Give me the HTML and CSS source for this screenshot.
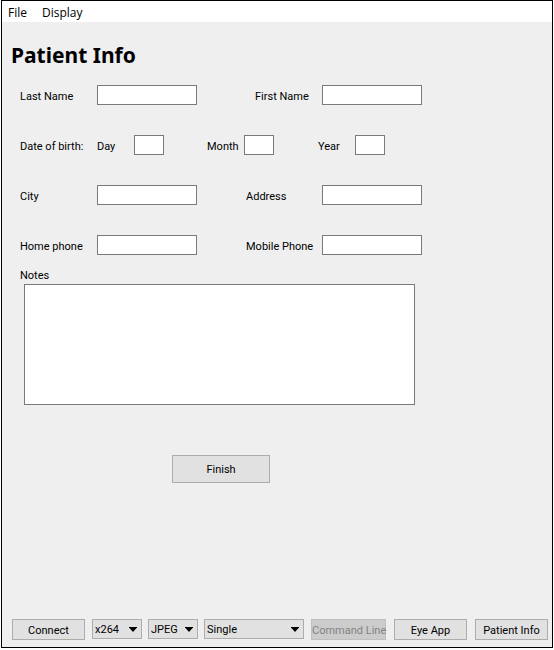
FILE: index.html
```html
<!DOCTYPE html>
<html lang="en">
<head>
<meta charset="utf-8">
<title>Patient Info</title>
<link rel="stylesheet" href="styles.css">
</head>
<body>
<div class="window">
  <nav class="menubar">
    <button type="button" class="menu">File</button>
    <button type="button" class="menu">Display</button>
  </nav>
  <main class="content">
    <h1 class="title">Patient Info</h1>
    <form class="form" id="patient">
      <div class="row">
        <label for="last">Last Name</label><input id="last" type="text">
        <label for="first" class="indent">First Name</label><input id="first" type="text">
      </div>
      <div class="row birth" role="group" aria-labelledby="birth">
        <span id="birth">Date of birth:</span>
        <label for="day">Day</label><input id="day" type="text">
        <label for="month">Month</label><input id="month" type="text">
        <label for="year">Year</label><input id="year" type="text">
      </div>
      <div class="row">
        <label for="city">City</label><input id="city" type="text">
        <label for="address">Address</label><input id="address" type="text">
      </div>
      <div class="row">
        <label for="home">Home phone</label><input id="home" type="text">
        <label for="mobile">Mobile Phone</label><input id="mobile" type="text">
      </div>
      <div class="notes">
        <label for="notes">Notes</label>
        <textarea id="notes"></textarea>
      </div>
      <button type="button" class="button finish">Finish</button>
    </form>
  </main>
  <footer class="toolbar">
    <button type="button" class="button">Connect</button>
    <div class="pickers">
      <div class="picker"><select aria-label="Codec"><option>x264</option></select></div>
      <div class="picker"><select aria-label="Image format"><option>JPEG</option></select></div>
      <div class="picker wide"><select aria-label="View"><option>Single</option></select></div>
    </div>
    <div class="views">
      <button type="button" class="button command" disabled>Command Line</button>
      <button type="button" class="button">Eye App</button>
      <button type="button" class="button">Patient Info</button>
    </div>
  </footer>
</div>
</body>
</html>
```
FILE: styles.css
```css
* {
  box-sizing: border-box;
}

body {
  margin: 0;
  padding: 0 1px 2px;
  background: #fff;
  color: #000;
  font: 11px/14px Roboto, "Noto Sans", sans-serif;
}

button,
input,
select,
textarea {
  margin: 0;
  border-radius: 0;
  color: inherit;
  font: inherit;
}

.window {
  display: flex;
  flex-direction: column;
  min-height: calc(100vh - 2px);
  border: 1px solid #000;
  background: #efefef;
}

.menubar {
  display: flex;
  gap: 15px;
  height: 21px;
  padding: 0 6px;
  background: #fff;
}

.menu {
  padding: 3px 0 0;
  border: 0;
  background: none;
  font: 12px/16px "Open Sans", "Noto Sans", sans-serif;
}

.content {
  flex: 1;
  padding: 18px 9px 0;
}

.title {
  margin: 0 0 15px;
  font: bold 21px/30px "Noto Sans", "Open Sans", sans-serif;
}

.form {
  padding-left: 9px;
}

.row {
  display: grid;
  grid-template-columns: 77px 149px 76px 100px;
  align-items: center;
  margin-bottom: 30px;
}

.row:nth-of-type(4) {
  margin-bottom: 14px;
}

.birth {
  grid-template-columns: 77px 37px 73px 37px 74px 37px 30px;
}

.row label,
.row span {
  padding-top: 4px;
  white-space: nowrap;
}

.row .indent {
  padding-left: 9px;
}

.row input {
  width: 100px;
  height: 20px;
  padding: 1px 3px;
  border: 1px solid #7a7a7a;
  background: #fff;
}

.birth input {
  width: 30px;
}

.notes label {
  display: block;
}

.notes textarea {
  display: block;
  width: 391px;
  max-width: 100%;
  height: 121px;
  margin: 1px 0 50px 4px;
  border: 1px solid #7a7a7a;
  background: #fff;
  resize: none;
}

.button {
  min-width: 73px;
  height: 21px;
  padding: 2px 0 0;
  border: 1px solid #adadad;
  background: #e1e1e1;
  white-space: nowrap;
}

.finish {
  display: block;
  width: 98px;
  height: 28px;
  margin-left: 152px;
}

.toolbar {
  display: flex;
  gap: 7px;
  padding: 0 4px 7px 10px;
}

.pickers {
  display: flex;
  flex: 1;
  gap: 6px;
}

.views {
  display: flex;
  gap: 8px;
}

.command {
  width: 75px;
  border-color: #bfbfbf;
  background: #ccc;
  color: #838383;
}

.picker {
  position: relative;
  width: 50px;
  height: 20px;
}

.wide {
  flex: 1;
}

.picker select {
  width: 100%;
  height: 100%;
  padding: 2px 2px 0;
  border: 1px solid #adadad;
  background: #e1e1e1;
  appearance: none;
}

.picker::after {
  content: "";
  position: absolute;
  top: 8px;
  right: 5px;
  width: 8px;
  height: 5px;
  background: #000;
  clip-path: polygon(0 0, 100% 0, 100% 10%, 50% 100%, 0 10%);
  pointer-events: none;
}
```
